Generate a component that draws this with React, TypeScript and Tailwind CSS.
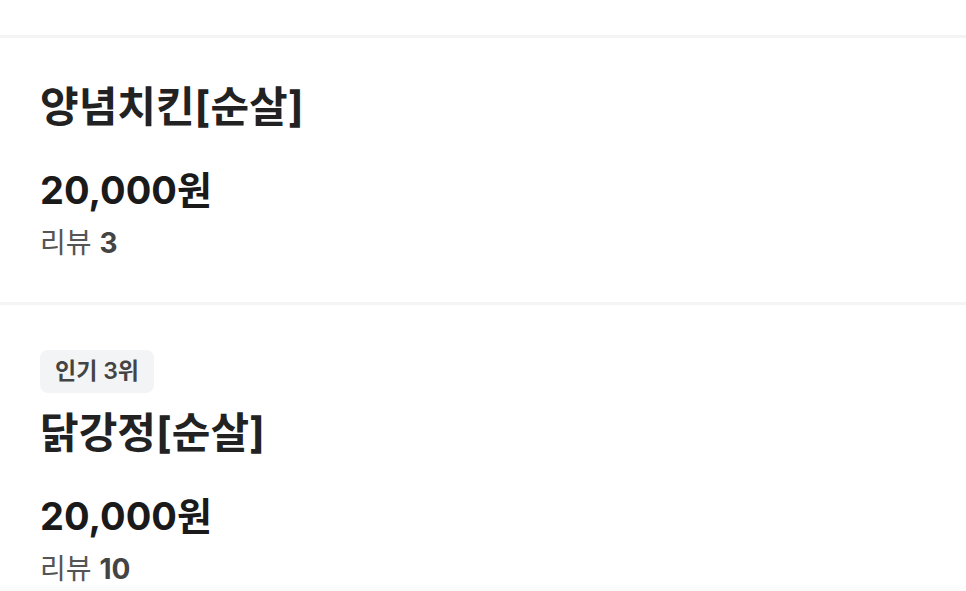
const items = [
  { rank: null as number | null, name: "양념치킨[순살]", price: 20000, reviews: 3 },
  { rank: 3, name: "닭강정[순살]", price: 20000, reviews: 10 },
];

function MenuItem({ rank, name, price, reviews }: (typeof items)[number]) {
  return (
    <li className="px-10 pt-[45px] pb-[41px]">
      {rank !== null && (
        <span className="mb-4 inline-flex h-[43px] items-center rounded-lg bg-[#f3f4f6] px-[15px] text-[23px] font-semibold text-[#444]">
          인기 {rank}위
        </span>
      )}
      <h3 className="text-[42px] font-bold leading-[48px] text-[#222]">{name}</h3>
      <p className="mt-[35px] text-[38px] font-bold leading-[48px] text-[#1a1a1a]">
        {price.toLocaleString("ko-KR")}원
      </p>
      <p className="mt-[11px] text-[28px] leading-[36px] text-[#555]">
        리뷰 <span className="font-bold text-[#444]">{reviews}</span>
      </p>
    </li>
  );
}

export default function App() {
  return (
    <div
      className="relative h-[591px] overflow-hidden bg-white"
      style={{ fontFamily: "Inter, 'Noto Sans CJK KR', sans-serif" }}
    >
      <div className="h-[35px]" />
      <ul className="divide-y-[3px] divide-[#f4f4f4] border-t-[3px] border-[#f4f4f4]">
        {items.map((item) => (
          <MenuItem key={item.name} {...item} />
        ))}
      </ul>
      <div className="pointer-events-none absolute inset-x-0 bottom-0 h-2 bg-gradient-to-b from-transparent to-black/[0.02]" />
    </div>
  );
}
